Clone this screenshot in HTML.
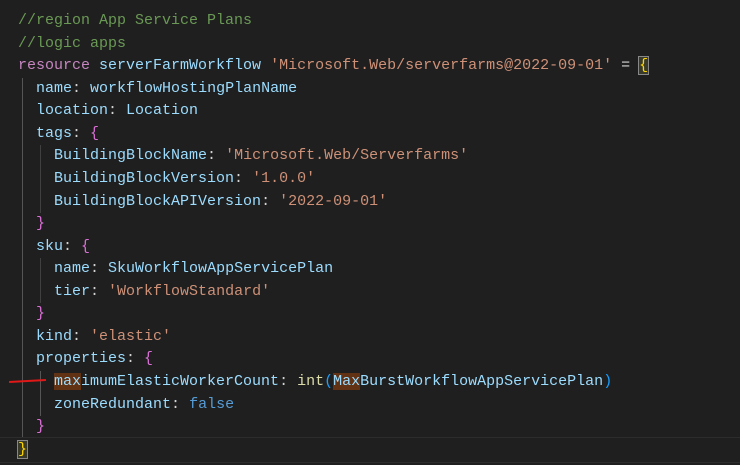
<!DOCTYPE html>
<html><head><style>
html,body{margin:0;padding:0;background:#1f1f1f;width:740px;height:465px;overflow:hidden}
#c{position:absolute;left:18px;top:10px;font-family:"Liberation Mono",monospace;font-size:15px;line-height:22.56px;color:#d4d4d4;white-space:pre}
.cm{color:#6a9955}.kw{color:#c586c0}.id{color:#9cdcfe}.s{color:#ce9178}.b1{color:#ffd700}.b2{color:#da70d6}.b3{color:#179fff}.f{color:#dcdcaa}.k{color:#569cd6}
.hl{background:#613214}
.bm{outline:1px solid #888;background:#3a3a2a}
.g{position:absolute;width:1px;background:#404040}
</style></head><body>
<div style="position:absolute;left:0;top:437px;width:740px;height:24px;border-top:1px solid #2c2c2c;border-bottom:1px solid #2c2c2c"></div>
<div class="g" style="left:22px;top:78px;height:359px;background:#555"></div>
<div class="g" style="left:40px;top:145px;height:68px"></div>
<div class="g" style="left:40px;top:258px;height:45px"></div>
<div class="g" style="left:40px;top:371px;height:45px;background:#555"></div>
<div style="position:absolute;left:9px;top:380px;width:37px;height:2px;background:#e01818;transform:rotate(-3deg)"></div>
<div id="c"><span class="cm">//region App Service Plans</span>
<span class="cm">//logic apps</span>
<span class="kw">resource</span> <span class="id">serverFarmWorkflow</span> <span class="s">'Microsoft.Web/serverfarms@2022-09-01'</span> = <span class="b1 bm">{</span>
  <span class="id">name</span>: <span class="id">workflowHostingPlanName</span>
  <span class="id">location</span>: <span class="id">Location</span>
  <span class="id">tags</span>: <span class="b2">{</span>
    <span class="id">BuildingBlockName</span>: <span class="s">'Microsoft.Web/Serverfarms'</span>
    <span class="id">BuildingBlockVersion</span>: <span class="s">'1.0.0'</span>
    <span class="id">BuildingBlockAPIVersion</span>: <span class="s">'2022-09-01'</span>
  <span class="b2">}</span>
  <span class="id">sku</span>: <span class="b2">{</span>
    <span class="id">name</span>: <span class="id">SkuWorkflowAppServicePlan</span>
    <span class="id">tier</span>: <span class="s">'WorkflowStandard'</span>
  <span class="b2">}</span>
  <span class="id">kind</span>: <span class="s">'elastic'</span>
  <span class="id">properties</span>: <span class="b2">{</span>
    <span class="id"><span class="hl">max</span>imumElasticWorkerCount</span>: <span class="f">int</span><span class="b3">(</span><span class="id"><span class="hl">Max</span>BurstWorkflowAppServicePlan</span><span class="b3">)</span>
    <span class="id">zoneRedundant</span>: <span class="k">false</span>
  <span class="b2">}</span>
<span class="b1 bm">}</span></div>
</body></html>
